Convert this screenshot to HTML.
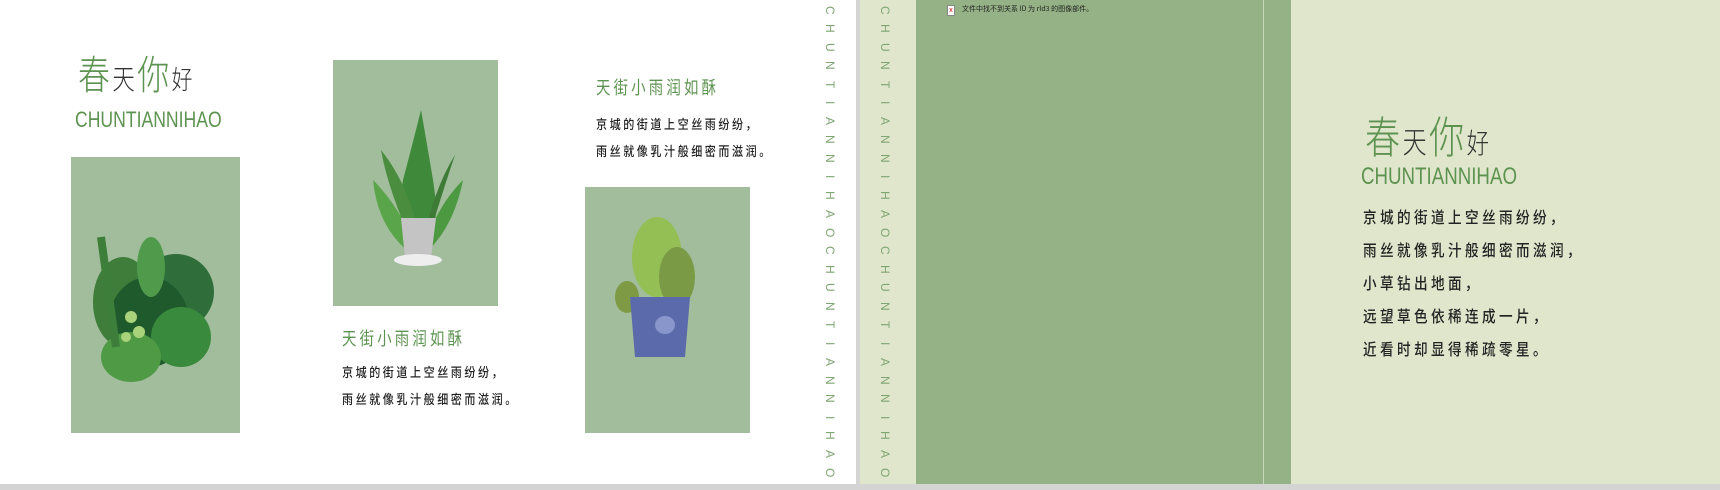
<!DOCTYPE html>
<html><head><meta charset="utf-8"><style>
*{margin:0;padding:0;box-sizing:border-box}
html{width:1720px;height:490px;overflow:hidden}
body{width:1720px;height:490px;overflow:hidden;background:#d4d4d4;position:relative;font-family:"Liberation Sans","Noto Sans CJK SC",sans-serif}
.abs{position:absolute}
.cn{font-family:"Noto Sans CJK SC","WenQuanYi Zen Hei",sans-serif}
.vt{writing-mode:vertical-rl;font-size:12px;color:#7fa572;font-family:"Liberation Sans",sans-serif;line-height:1;height:484px;overflow:hidden}
.vt span{display:inline-block;inline-size:18.5px;text-align:center}
.para{font-size:13px;color:#222;letter-spacing:3px;line-height:27px;transform:scaleX(.85);transform-origin:left;font-weight:500}
</style></head><body>
<div class="abs" style="left:0;top:0;width:856px;height:484px;background:#fff"></div>
<div class="abs cn" style="left:78px;top:52px;font-size:40px;color:#5d9350;line-height:1;font-weight:300;letter-spacing:3px;transform:scaleX(.8);transform-origin:left">春<span style="font-size:28px;color:#333">天</span>你<span style="font-size:26px;color:#333">好</span></div>
<div class="abs" style="left:75px;top:107px;font-size:22px;color:#5d9350;transform:scaleX(.8);transform-origin:left">CHUNTIANNIHAO</div>
<div class="abs" style="left:71px;top:157px;width:169px;height:276px;background:#a1bd9c"></div>
<svg class="abs" style="left:71px;top:157px" width="169" height="276">
<g>
<ellipse cx="52" cy="145" rx="30" ry="45" fill="#3f7d3b"/>
<ellipse cx="105" cy="135" rx="38" ry="38" fill="#2f6e3a"/>
<ellipse cx="78" cy="165" rx="40" ry="45" fill="#1f5a2d"/>
<ellipse cx="110" cy="180" rx="30" ry="30" fill="#3a8a3e"/>
<ellipse cx="60" cy="200" rx="30" ry="25" fill="#4f9a45"/>
<path d="M30 80 L45 190" stroke="#3d7e3a" stroke-width="8"/>
<ellipse cx="80" cy="110" rx="14" ry="30" fill="#4f9a4b"/>
<circle cx="60" cy="160" r="6" fill="#a9d37a"/><circle cx="68" cy="175" r="6" fill="#a9d37a"/><circle cx="55" cy="180" r="5" fill="#a9d37a"/>
</g></svg>
<div class="abs" style="left:333px;top:60px;width:165px;height:246px;background:#a1bd9c"></div>
<svg class="abs" style="left:333px;top:60px" width="165" height="246">
<path d="M85 195 Q60 180 70 120 Q78 90 88 50 Q95 90 100 120 Q110 180 85 195Z" fill="#3f8a3a"/>
<path d="M80 195 Q45 170 40 120 Q70 150 85 195Z" fill="#5aa549"/>
<path d="M90 195 Q120 170 130 120 Q100 150 90 195Z" fill="#4d9942"/>
<path d="M82 190 Q55 130 48 90 Q80 130 88 190Z" fill="#4a8d3f"/>
<path d="M92 190 Q110 130 122 95 Q100 130 88 190Z" fill="#3d7b36"/>
<path d="M68 158 L103 158 L98 198 L72 198Z" fill="#c4c4c4"/>
<ellipse cx="85" cy="200" rx="24" ry="6" fill="#eee"/>
</svg>
<div class="abs" style="left:585px;top:187px;width:165px;height:246px;background:#a1bd9c"></div>
<svg class="abs" style="left:585px;top:187px" width="165" height="246">
<ellipse cx="72" cy="70" rx="25" ry="40" fill="#93bf54"/>
<ellipse cx="92" cy="90" rx="18" ry="30" fill="#7a9a45"/>
<ellipse cx="42" cy="110" rx="12" ry="16" fill="#7f9a45"/>
<path d="M45 110 L105 110 L100 170 L50 170Z" fill="#5b6aab"/>
<ellipse cx="80" cy="138" rx="10" ry="9" fill="#8896cc"/>
</svg>
<div class="abs cn" style="left:596px;top:74px;font-size:18px;color:#5d9350;letter-spacing:4px;transform:scaleX(.8);transform-origin:left">天街小雨润如酥</div>
<div class="abs cn para" style="left:596px;top:110px">京城的街道上空丝雨纷纷，<br>雨丝就像乳汁般细密而滋润。</div>
<div class="abs cn" style="left:342px;top:325px;font-size:18px;color:#5d9350;letter-spacing:4px;transform:scaleX(.8);transform-origin:left">天街小雨润如酥</div>
<div class="abs cn para" style="left:342px;top:358px">京城的街道上空丝雨纷纷，<br>雨丝就像乳汁般细密而滋润。</div>
<div class="abs vt" style="left:824px;top:1px"><span>C</span><span>H</span><span>U</span><span>N</span><span>T</span><span>I</span><span>A</span><span>N</span><span>N</span><span>I</span><span>H</span><span>A</span><span>O</span><span>C</span><span>H</span><span>U</span><span>N</span><span>T</span><span>I</span><span>A</span><span>N</span><span>N</span><span>I</span><span>H</span><span>A</span><span>O</span></div>
<div class="abs" style="left:860px;top:0;width:860px;height:484px;background:#e0e6cc"></div>
<div class="abs" style="left:916px;top:0;width:375px;height:484px;background:#94b285"></div>
<div class="abs" style="left:1263px;top:0;width:1px;height:484px;background:#c8d8bc"></div>
<div class="abs vt" style="left:879px;top:1px"><span>C</span><span>H</span><span>U</span><span>N</span><span>T</span><span>I</span><span>A</span><span>N</span><span>N</span><span>I</span><span>H</span><span>A</span><span>O</span><span>C</span><span>H</span><span>U</span><span>N</span><span>T</span><span>I</span><span>A</span><span>N</span><span>N</span><span>I</span><span>H</span><span>A</span><span>O</span></div>
<div class="abs" style="left:947px;top:5px;width:8px;height:11px;border:1px solid #888;background:#fff;color:#d00;font-size:7px;text-align:center;line-height:9px">x</div>
<div class="abs cn" style="left:962px;top:4px;font-size:7px;color:#222">文件中找不到关系 ID 为 rId3 的图像部件。</div>
<div class="abs cn" style="left:1365px;top:112px;font-size:44px;color:#5d9350;line-height:1;font-weight:300;letter-spacing:3px;transform:scaleX(.8);transform-origin:left">春<span style="font-size:30px;color:#333">天</span>你<span style="font-size:28px;color:#333">好</span></div>
<div class="abs" style="left:1361px;top:163px;font-size:24px;color:#5d9350;transform:scaleX(.78);transform-origin:left">CHUNTIANNIHAO</div>
<div class="abs cn" style="left:1363px;top:200px;font-size:16px;color:#222;font-weight:500;letter-spacing:4px;line-height:33px;transform:scaleX(.85);transform-origin:left">京城的街道上空丝雨纷纷，<br>雨丝就像乳汁般细密而滋润，<br>小草钻出地面，<br>远望草色依稀连成一片，<br>近看时却显得稀疏零星。</div>
</body></html>
